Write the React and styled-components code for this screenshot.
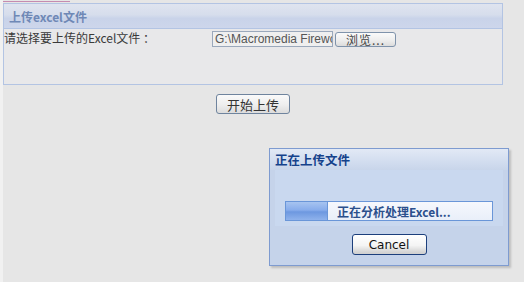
import React from "react";
import styled, { createGlobalStyle } from "styled-components";

const Global = createGlobalStyle`
  html, body { margin: 0; padding: 0; background: #e6e6e6; }
  body { font-family: Tahoma, "DejaVu Sans", "Noto Sans CJK SC", sans-serif; font-size: 12px; color: #333; }
`;

const Page = styled.div`
  position: relative;
  width: 521px;
  height: 282px;
  border-left: 3px solid #f1f1f1;
  background: #e6e6e6;
  overflow: hidden;
`;

const TopLine = styled.div`
  width: 67px;
  height: 1px;
  margin-top: 1px;
  background: #c58bb0;
`;

const Panel = styled.section`
  width: 498px;
  margin-top: 1px;
  border: 1px solid #b3c4e3;
  background: #e8e8ea;
`;

const PanelHeader = styled.div`
  height: 24px;
  display: flex;
  align-items: center;
  padding-left: 5px;
  border-bottom: 1px solid #b3c4e3;
  background: linear-gradient(#dfe4ef 0%, #d6ddec 45%, #c9d3e9 60%, #cdd6eb 100%);
  color: #6f88b6;
  font-weight: bold;
  font-size: 12px;
  font-family: "Noto Sans CJK SC", sans-serif;
`;

const PanelBody = styled.div`
  height: 54px;
  display: grid;
  grid-template-columns: 208px auto auto;
  justify-content: start;
  align-items: start;
  padding-top: 1px;
`;

const Label = styled.span`
  font-family: "Noto Sans CJK SC", sans-serif;
  font-size: 12px;
  line-height: 16px;
  color: #3a3a3a;
  white-space: pre;
`;

const FileInput = styled.div`
  width: 117px;
  height: 14px;
  border: 1px solid #9aa8bb;
  background: #efefef;
  color: #555;
  font-family: "Liberation Sans", sans-serif;
  font-size: 12px;
  line-height: 14px;
  padding-left: 2px;
  overflow: hidden;
  white-space: nowrap;
  margin-top: 1px;
`;

const Button = styled.button`
  box-sizing: border-box;
  width: ${(p) => p.w}px;
  height: ${(p) => p.h}px;
  margin: 0;
  padding: 0;
  border: 1px solid ${(p) => p.border || "#7f93ab"};
  border-radius: 3px;
  background: linear-gradient(#fafafa 0%, #eeeeee 55%, #dcdcdc 100%);
  font-family: "Noto Sans CJK SC", Tahoma, "DejaVu Sans", sans-serif;
  font-size: 12px;
  color: #444;
  line-height: 1;
  cursor: default;
`;

const BrowseButton = styled(Button)`
  margin-left: 2px;
  margin-top: 2px;
  letter-spacing: 1px;
`;

const ActionRow = styled.div`
  width: 500px;
  display: flex;
  justify-content: center;
  margin-top: 9px;
`;

const StartButton = styled(Button)`
  font-size: 13px;
  color: #333;
  border-color: #6f849e;
`;

const Dialog = styled.div`
  position: absolute;
  left: 266px;
  top: 148px;
  width: 238px;
  height: 116px;
  border: 1px solid #7e9bd0;
  background: #c5d3ea;
  box-shadow: 2px 2px 2px rgba(0, 0, 0, 0.18);
  display: flex;
  flex-direction: column;
  align-items: center;
`;

const DialogHeader = styled.div`
  align-self: stretch;
  height: 21px;
  display: flex;
  align-items: center;
  padding-left: 5px;
  background: linear-gradient(#e2e9f5 0%, #d2ddef 60%, #c8d5ea 100%);
  color: #15428b;
  font-weight: bold;
  font-size: 12.5px;
  font-family: "Noto Sans CJK SC", sans-serif;
`;

const DialogInner = styled.div`
  align-self: stretch;
  margin: 0 5px;
  height: 51px;
  background: #c9d8ef;
  display: flex;
  align-items: flex-end;
  padding: 0 10px 5px;
`;

const Progress = styled.div`
  flex: 1;
  height: 18px;
  border: 1px solid #6a96d8;
  background: linear-gradient(#f6f8fd, #e9eff9);
  display: flex;
  align-items: center;
`;

const ProgressFill = styled.div`
  height: 100%;
  border-right: 1px solid #6a96d8;
  background: linear-gradient(#a7c4f0 0%, #87aceb 45%, #6d98e0 55%, #8fb2ec 100%);
`;

const ProgressText = styled.span`
  margin-left: 9px;
  font-weight: bold;
  font-size: 12px;
  color: #2b4f8c;
  font-family: "Noto Sans CJK SC", Tahoma, sans-serif;
`;

const CancelButton = styled(Button)`
  margin-top: 8px;
  border-color: #1c3f7c;
  border-radius: 3px;
  background: linear-gradient(#ffffff 0%, #f4f4f4 55%, #d8d8d8 85%, #cfcfcf 100%);
  font-family: Tahoma, "DejaVu Sans", sans-serif;
  font-size: 12px;
  color: #111;
`;

export default function App() {
  const progress = 41;
  return (
    <>
      <Global />
      <Page>
        <TopLine />
        <Panel>
          <PanelHeader>上传excel文件</PanelHeader>
          <PanelBody>
            <Label>请选择要上传的Excel文件 ：</Label>
            <FileInput>G:\Macromedia Firewo</FileInput>
            <BrowseButton w={61} h={15}>浏览...</BrowseButton>
          </PanelBody>
        </Panel>
        <ActionRow>
          <StartButton w={74} h={20}>开始上传</StartButton>
        </ActionRow>
        <Dialog>
          <DialogHeader>正在上传文件</DialogHeader>
          <DialogInner>
            <Progress>
              <ProgressFill style={{ width: progress }} />
              <ProgressText>正在分析处理Excel...</ProgressText>
            </Progress>
          </DialogInner>
          <CancelButton w={75} h={21}>Cancel</CancelButton>
        </Dialog>
      </Page>
    </>
  );
}
